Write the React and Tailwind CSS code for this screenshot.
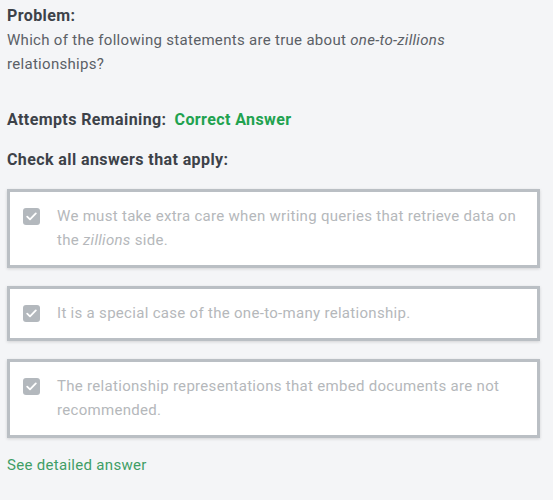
import React from 'react';

const options = [
  { id: 1, text: <>We must take extra care when writing queries that retrieve data on the <em>zillions</em> side.</> },
  { id: 2, text: <>It is a special case of the one-to-many relationship.</> },
  { id: 3, text: <>The relationship representations that embed documents are not recommended.</> },
];

const CheckIcon = () => (
  <span className="mt-[4px] flex h-[17px] w-[17px] shrink-0 items-center justify-center rounded-[3px] bg-[#b3b8bd]">
    <svg width="11" height="9" viewBox="0 0 11 9" fill="none">
      <path d="M1.2 4.6 L4 7.3 L9.8 1.4" stroke="#fff" strokeWidth="1.8" strokeLinecap="round" strokeLinejoin="round" />
    </svg>
  </span>
);

export default function App() {
  return (
    <div className="min-h-[500px] bg-[#f4f5f7] px-[7px] pt-[4px] text-[15px] leading-[24px] tracking-[0.3px]" style={{ fontFamily: 'Roboto, "Liberation Sans", sans-serif' }}>
      {/* Problem */}
      <div className="text-[16px] font-bold tracking-[0.4px] text-[#3d4249]">Problem:</div>
      <div className="max-w-[460px] text-[#5b6066]">
        Which of the following statements are true about <em>one-to-zillions</em> relationships?
      </div>

      <div className="mt-[32px] flex gap-[8px] text-[16px] font-bold tracking-[0.4px]">
        <span className="text-[#3d4249]">Attempts Remaining:</span>
        <span className="text-[#21a24f]">Correct Answer</span>
      </div>

      <div className="mt-[16px] text-[16px] font-bold tracking-[0.4px] text-[#3d4249]">Check all answers that apply:</div>

      <div className="mt-[17px] flex w-[533px] flex-col gap-[18px]">
        {options.map((o) => (
          <div key={o.id} className="flex gap-[17px] border-[3px] border-[#babfc4] bg-white pt-[12px] pb-[13px] pl-[13px] pr-[16px] shadow-[0_1px_3px_rgba(0,0,0,0.14)]">
            <CheckIcon />
            <div className="text-[#b5b8bb]">{o.text}</div>
          </div>
        ))}
      </div>

      <div className="mt-[15px] text-[#3f9e66]">See detailed answer</div>
    </div>
  );
}
